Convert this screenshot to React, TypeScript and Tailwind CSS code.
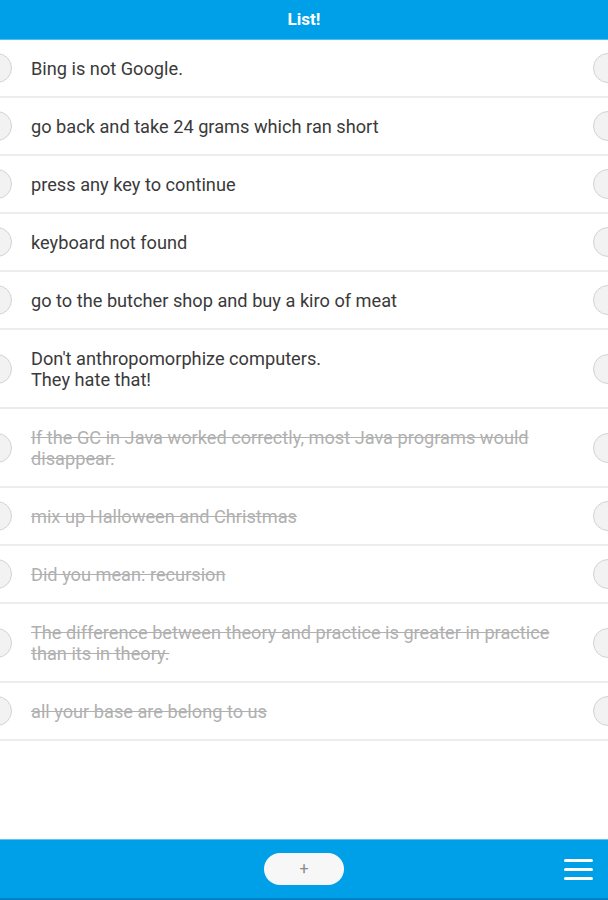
import React from "react";

type Item = { text: string; done: boolean };

const items: Item[] = [
  { text: "Bing is not Google.", done: false },
  { text: "go back and take 24 grams which ran short", done: false },
  { text: "press any key to continue", done: false },
  { text: "keyboard not found", done: false },
  { text: "go to the butcher shop and buy a kiro of meat", done: false },
  { text: "Don't anthropomorphize computers.\nThey hate that!", done: false },
  { text: "If the GC in Java worked correctly, most Java programs would disappear.", done: true },
  { text: "mix up Halloween and Christmas", done: true },
  { text: "Did you mean: recursion", done: true },
  { text: "The difference between theory and practice is greater in practice than its in theory.", done: true },
  { text: "all your base are belong to us", done: true },
];

function Knob({ side }: { side: "left" | "right" }) {
  return (
    <div
      className={`shrink-0 w-[30px] h-[30px] -my-[10px] rounded-full bg-[#f2f2f2] border border-[#d2d2d2] ${
        side === "left" ? "-ml-[18px]" : "-mr-[15px]"
      }`}
    />
  );
}

export default function App() {
  return (
    <div
      className="h-[900px] w-[608px] flex flex-col bg-white overflow-hidden"
      style={{ fontFamily: "Roboto, 'Noto Sans', sans-serif" }}
    >
      {/* header */}
      <div className="h-[40px] shrink-0 bg-[#00a0e9] border-b border-[#4fbdf0] flex items-center justify-center">
        <span className="text-white font-bold text-[17px]">List!</span>
      </div>

      {/* list */}
      <div className="flex-1 flex flex-col overflow-hidden">
        {items.map((it, i) => (
          <div
            key={i}
            className="flex items-center border-b-2 border-[#ececec] py-[17.5px] overflow-hidden"
          >
            <Knob side="left" />
            <div
              className={`flex-1 ml-[19px] mr-[15px] text-[18.2px] leading-[21px] whitespace-pre-line ${
                it.done ? "text-[#b0b0b0] line-through" : "text-[#3a3a3a]"
              }`}
            >
              {it.text}
            </div>
            <Knob side="right" />
          </div>
        ))}
      </div>

      {/* footer */}
      <div className="h-[61px] shrink-0 bg-[#00a0e9] border-t border-[#5cc3f2] border-b-2 border-b-[#0082c4] relative flex items-center justify-center">
        <button className="w-[80px] h-[32px] rounded-full bg-[#f7f7f7] flex items-center justify-center text-[#8a8a8a] text-[16px] leading-none">
          +
        </button>
        <div className="absolute right-[15px] top-[19px] flex flex-col gap-[6px]">
          <div className="w-[29px] h-[3px] bg-white rounded-sm" />
          <div className="w-[29px] h-[3px] bg-white rounded-sm" />
          <div className="w-[29px] h-[3px] bg-white rounded-sm" />
        </div>
      </div>
    </div>
  );
}
